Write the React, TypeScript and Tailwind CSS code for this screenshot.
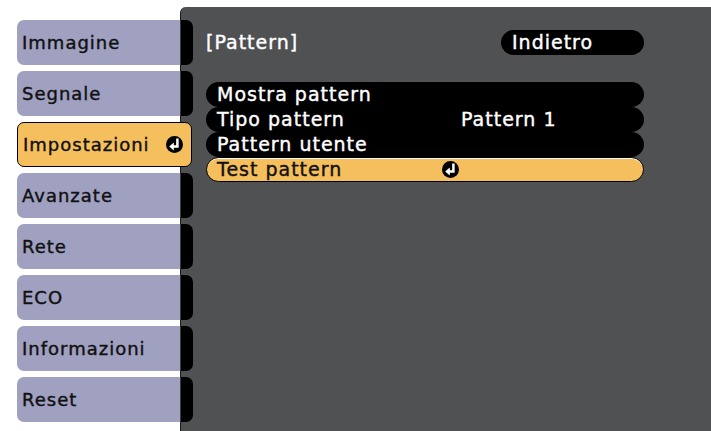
import React from "react";

function EnterIcon() {
  return (
    <svg width="17" height="17" viewBox="0 0 17 17" className="shrink-0">
      <circle cx="8.5" cy="8.5" r="8.5" fill="#000" />
      <path d="M11.4 3.8 V10.4 H7" stroke="#fff" strokeWidth="2.5" fill="none" strokeLinecap="square" />
      <polygon points="3.2,10.4 7.8,6.4 7.8,14.4" fill="#fff" />
    </svg>
  );
}

const tabs = ["Immagine", "Segnale", "Impostazioni", "Avanzate", "Rete", "ECO", "Informazioni", "Reset"];

export default function App() {
  return (
    <div className="w-[711px] h-[431px] bg-white flex overflow-hidden font-['DejaVu_Sans',sans-serif] [-webkit-text-stroke:0.4px_currentColor]">
      <div className="w-[180px] shrink-0 pl-[17px] pt-[20px] flex flex-col gap-[6px] relative z-10">
        {tabs.map((t) =>
          t === "Impostazioni" ? (
            <div
              key={t}
              className="h-[45px] w-[175px] flex items-center justify-between pl-[5px] pr-[8px] bg-[#f5bf5d] border border-black rounded-[7px] text-[18px] tracking-[1px] text-[#111]"
            >
              <span>{t}</span>
              <EnterIcon />
            </div>
          ) : (
            <div key={t} className="h-[45px] w-[176px] flex">
              <div className="w-[163px] h-full bg-[#a0a0c0] rounded-l-[7px] flex items-center pl-[5px] text-[18px] tracking-[1px] text-[#111]">
                {t}
              </div>
              <div className="w-[13px] h-full bg-black rounded-r-[7px] border-l border-[#3a3a3a]" />
            </div>
          )
        )}
      </div>
      <div className="flex-1 mt-[7px] bg-[#505153] rounded-tl-[6px] border-l border-[#1a1a1a] pl-[25px] pr-[67px] pt-[23px] text-white text-[19px] tracking-[1px]">
        <div className="flex items-center justify-between h-[25px]">
          <span>[Pattern]</span>
          <div className="w-[143px] h-[25px] bg-black rounded-full flex items-center pl-[11px]">Indietro</div>
        </div>
        <div className="mt-[27px] flex flex-col">
          <div className="h-[25px] bg-black rounded-full flex items-center pl-[11px]">Mostra pattern</div>
          <div className="h-[25px] bg-black rounded-full flex items-center pl-[11px]">
            <span className="w-[244px]">Tipo pattern</span>
            <span>Pattern 1</span>
          </div>
          <div className="h-[25px] bg-black rounded-full flex items-center pl-[11px]">Pattern utente</div>
          <div className="h-[25px] bg-[#f5bf5d] border border-black shadow-[inset_0_1px_0_#fff] rounded-full flex items-center pl-[10px] text-[#111]">
            <span className="w-[225px]">Test pattern</span>
            <EnterIcon />
          </div>
        </div>
      </div>
    </div>
  );
}
